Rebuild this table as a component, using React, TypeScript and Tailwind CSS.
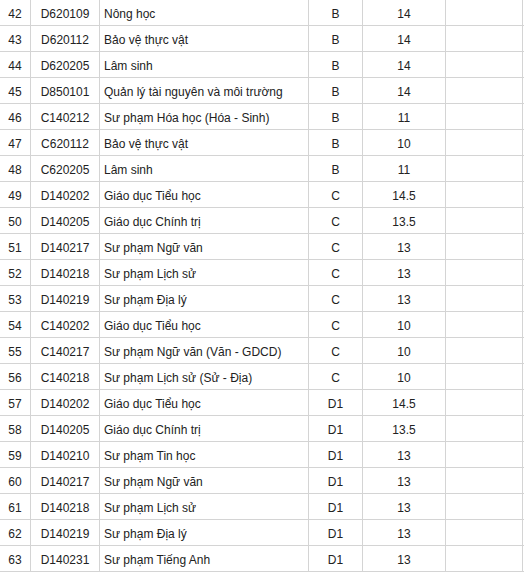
const rows: [string, string, string, string, string][] = [
  ['42', 'D620109', 'Nông học', 'B', '14'],
  ['43', 'D620112', 'Bảo vệ thực vật', 'B', '14'],
  ['44', 'D620205', 'Lâm sinh', 'B', '14'],
  ['45', 'D850101', 'Quản lý tài nguyên và môi trường', 'B', '14'],
  ['46', 'C140212', 'Sư phạm Hóa học (Hóa - Sinh)', 'B', '11'],
  ['47', 'C620112', 'Bảo vệ thực vật', 'B', '10'],
  ['48', 'C620205', 'Lâm sinh', 'B', '11'],
  ['49', 'D140202', 'Giáo dục Tiểu học', 'C', '14.5'],
  ['50', 'D140205', 'Giáo dục Chính trị', 'C', '13.5'],
  ['51', 'D140217', 'Sư phạm Ngữ văn', 'C', '13'],
  ['52', 'D140218', 'Sư phạm Lịch sử', 'C', '13'],
  ['53', 'D140219', 'Sư phạm Địa lý', 'C', '13'],
  ['54', 'C140202', 'Giáo dục Tiểu học', 'C', '10'],
  ['55', 'C140217', 'Sư phạm Ngữ văn (Văn - GDCD)', 'C', '10'],
  ['56', 'C140218', 'Sư phạm Lịch sử (Sử - Địa)', 'C', '10'],
  ['57', 'D140202', 'Giáo dục Tiểu học', 'D1', '14.5'],
  ['58', 'D140205', 'Giáo dục Chính trị', 'D1', '13.5'],
  ['59', 'D140210', 'Sư phạm Tin học', 'D1', '13'],
  ['60', 'D140217', 'Sư phạm Ngữ văn', 'D1', '13'],
  ['61', 'D140218', 'Sư phạm Lịch sử', 'D1', '13'],
  ['62', 'D140219', 'Sư phạm Địa lý', 'D1', '13'],
  ['63', 'D140231', 'Sư phạm Tiếng Anh', 'D1', '13'],
];

const cell = 'flex items-center border-r border-[#d4d4d4] pt-[2px]';

export default function App() {
  return (
    <div className="w-[524px] h-[572px] overflow-hidden bg-white font-['Liberation_Sans',Arial,sans-serif] text-[12px] text-[#222]">
      {rows.map(([stt, code, name, block, score]) => (
        <div
          key={stt}
          className="grid grid-cols-[31px_69px_209px_54px_83px_77px] h-[26px] border-b border-[#d4d4d4]"
        >
          <div className={`${cell} justify-center`}>{stt}</div>
          <div className={`${cell} justify-center`}>{code}</div>
          <div className={`${cell} pl-[4px]`}>{name}</div>
          <div className={`${cell} justify-center`}>{block}</div>
          <div className={`${cell} justify-center`}>{score}</div>
          <div className={cell}></div>
        </div>
      ))}
    </div>
  );
}
